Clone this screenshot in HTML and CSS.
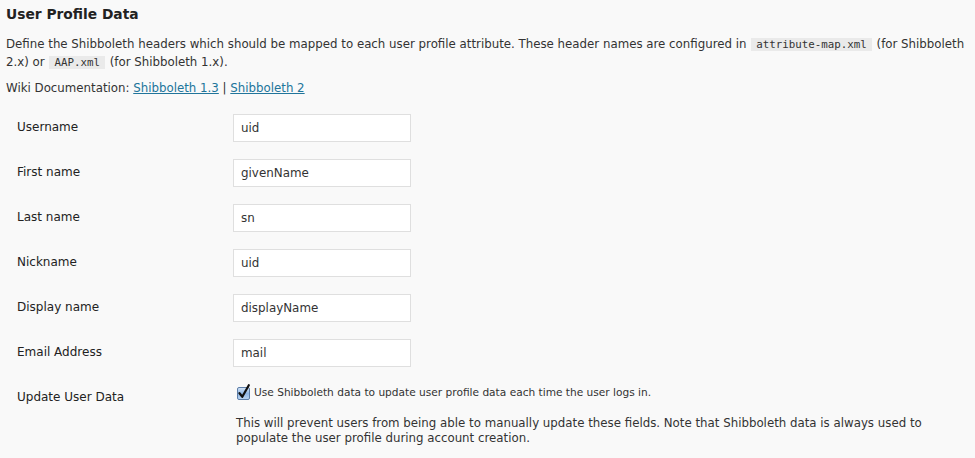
FILE: index.html
```html
<!DOCTYPE html>
<html>
<head>
<meta charset="utf-8">
<link rel="stylesheet" href="styles.css">
</head>
<body>
<div class="wrap">
  <h3 class="title">User Profile Data</h3>
  <p class="intro">Define the Shibboleth headers which should be mapped to each user profile attribute. These header names are configured in <code>attribute-map.xml</code> (for Shibboleth 2.x) or <code>AAP.xml</code> (for Shibboleth 1.x).</p>
  <p class="wiki">Wiki Documentation: <a href="#">Shibboleth 1.3</a> | <a href="#">Shibboleth 2</a></p>
  <div class="form">
    <div class="row"><div class="th">Username</div><div class="td"><input class="field" type="text" value="uid"></div></div>
    <div class="row"><div class="th">First name</div><div class="td"><input class="field" type="text" value="givenName"></div></div>
    <div class="row"><div class="th">Last name</div><div class="td"><input class="field" type="text" value="sn"></div></div>
    <div class="row"><div class="th">Nickname</div><div class="td"><input class="field" type="text" value="uid"></div></div>
    <div class="row"><div class="th">Display name</div><div class="td"><input class="field" type="text" value="displayName"></div></div>
    <div class="row"><div class="th">Email Address</div><div class="td"><input class="field" type="text" value="mail"></div></div>
    <div class="row last"><div class="th">Update User Data</div>
      <div class="td">
        <label class="check">
          <svg class="box" width="15" height="16" viewBox="0 0 15 16">
            <defs>
              <linearGradient id="g" x1="0" y1="0" x2="0" y2="1">
                <stop offset="0" stop-color="#d6e6f7"/>
                <stop offset="0.5" stop-color="#8fb6e4"/>
                <stop offset="1" stop-color="#bcd6f2"/>
              </linearGradient>
            </defs>
            <rect x="1.5" y="3.5" width="12" height="12" rx="1.5" fill="url(#g)" stroke="#5d7ea8"/>
            <path d="M3.5 9.2 L6.3 12.8 L12.8 1.2" fill="none" stroke="#111" stroke-width="2.2" stroke-linecap="round" stroke-linejoin="round"/>
          </svg>
          <span>Use Shibboleth data to update user profile data each time the user logs in.</span>
        </label>
        <p class="description">This will prevent users from being able to manually update these fields. Note that Shibboleth data is always used to populate the user profile during account creation.</p>
      </div>
    </div>
  </div>
</div>
</body>
</html>
```
FILE: styles.css
```css
html, body {
  margin: 0;
  padding: 0;
  background: #f9f9f9;
}
body {
  font-family: "DejaVu Sans", Verdana, sans-serif;
  font-size: 11.8px;
  color: #333;
}
.wrap {
  padding: 0 6px;
}
.title {
  margin: 0;
  padding-top: 4px;
  font-size: 13.8px;
  line-height: 20px;
  font-weight: bold;
  color: #222;
}
.intro {
  margin: 11px 0 0;
  line-height: 18px;
  max-width: 965px;
}
code {
  display: inline-block;
  font-family: "DejaVu Sans Mono", monospace;
  font-size: 10.8px;
  line-height: 13px;
  background: #eaeaea;
  padding: 0 5px;
  margin: 0 1px;
}
.wiki {
  margin: 8px 0 0;
  line-height: 18px;
}
a {
  color: #21759b;
  text-decoration: underline;
}
.form {
  margin-top: 8px;
  padding-left: 11px;
}
.row {
  display: flex;
  align-items: flex-start;
  height: 45px;
}
.row.last {
  height: auto;
}
.th {
  width: 216px;
  padding-top: 12px;
  line-height: 20px;
  font-size: 12px;
  color: #222;
}
.td {
  padding-top: 9px;
}
.field {
  box-sizing: border-box;
  width: 178px;
  height: 28px;
  margin: 0;
  padding: 2px 7px;
  border: 1px solid #dfdfdf;
  background: #fff;
  font-family: "DejaVu Sans", Verdana, sans-serif;
  font-size: 11.9px;
  color: #333;
  outline: none;
}
.check {
  display: flex;
  align-items: center;
  height: 16px;
  padding-left: 3px;
  font-size: 10.6px;
}
.box {
  display: block;
  margin-right: 3px;
}
.description {
  margin: 16px 0 0;
  padding-left: 3px;
  width: 720px;
  font-size: 11.8px;
  line-height: 15px;
}
```
